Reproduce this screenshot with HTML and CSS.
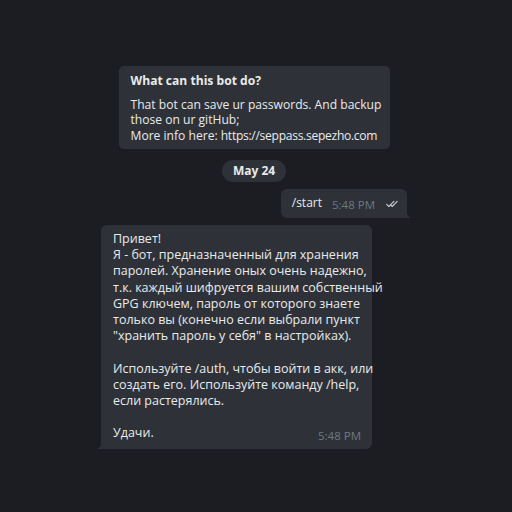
FILE: index.html
```html
<!DOCTYPE html>
<html lang="ru">
<head>
<meta charset="utf-8">
<link rel="stylesheet" href="styles.css">
</head>
<body>
<div class="chat">
  <div class="intro">
    <div class="intro-title">What can this bot do?</div>
    <div class="intro-text">That bot can save ur passwords. And backup<br>those on ur gitHub;<br>More info here: <span class="url">https://seppass.sepezho.com</span></div>
  </div>
  <div class="date">May 24</div>
  <div class="msg out">
    <span class="msg-text">/start</span>
    <span class="time">5:48 PM</span>
    <svg class="checks" width="12" height="8" viewBox="0 0 12 8"><path d="M0.7 4.3 L2.9 6.5 L7.9 1.3 M4.9 5.2 L6.2 6.5 L11.2 1.3" fill="none" stroke="#c9ccd1" stroke-width="1.1" stroke-linecap="round" stroke-linejoin="round"/></svg>
  </div>
  <div class="msg in">
    <p>Привет!<br>Я - бот, предназначенный для хранения<br>паролей. Хранение оных очень надежно,<br>т.к. каждый шифруется вашим собственный<br>GPG ключем, пароль от которого знаете<br>только вы (конечно если выбрали пункт<br>"хранить пароль у себя" в настройках).</p>
    <p>Используйте /auth, чтобы войти в акк, или<br>создать его. Используйте команду /help,<br>если растерялись.</p>
    <p>Удачи.<span class="time in-time">5:48 PM</span></p>
  </div>
</div>
</body>
</html>
```

FILE: styles.css
```css
html, body {
  margin: 0;
  padding: 0;
  background: #1c1d22;
  width: 512px;
  height: 512px;
  overflow: hidden;
}

body {
  font-family: "Open Sans", "Noto Sans", sans-serif;
  color: #e9eaec;
}

.chat {
  width: 306px;
  margin-left: 101px;
  padding-top: 66px;
  display: flex;
  flex-direction: column;
}

.intro {
  align-self: center;
  box-sizing: border-box;
  width: 271px;
  height: 83px;
  background: #2e3238;
  border-radius: 5px;
  padding: 7px 12px 0;
  font-size: 12.1px;
  line-height: 15.5px;
}

.intro-title {
  font-weight: 700;
  margin-bottom: 8px;
}

.intro-text {
  white-space: nowrap;
}

.url {
  letter-spacing: -0.3px;
}

.date {
  align-self: center;
  margin-top: 11px;
  height: 22px;
  box-sizing: border-box;
  padding: 0 11px;
  border-radius: 11px;
  background: #2e3238;
  font-size: 12px;
  font-weight: 700;
  line-height: 22px;
}

.msg {
  background: #2e3238;
  border-radius: 6px;
  position: relative;
  font-size: 12.5px;
}

.msg.out {
  align-self: flex-end;
  margin-top: 7px;
  height: 29px;
  box-sizing: border-box;
  padding: 0 9px 0 11px;
  display: flex;
  align-items: center;
  border-bottom-right-radius: 0;
}

.msg.out::after {
  content: "";
  position: absolute;
  right: -6px;
  bottom: 0;
  width: 6px;
  height: 6px;
  background: radial-gradient(circle at 100% 0, transparent 6px, #2e3238 6.5px);
}

.msg.out .msg-text {
  margin-top: -2px;
  font-size: 12px;
}

.time {
  color: #6d7882;
  font-size: 11.5px;
}

.msg.out .time {
  margin-left: 10px;
  margin-top: 2px;
}

.checks {
  margin-left: 11px;
  margin-top: 1px;
}

.msg.in {
  align-self: flex-start;
  margin-top: 7px;
  width: 271px;
  box-sizing: border-box;
  padding: 6px 11px 4px 12px;
  line-height: 16.2px;
  white-space: nowrap;
  border-bottom-left-radius: 0;
}

.msg.in::after {
  content: "";
  position: absolute;
  left: -6px;
  bottom: 0;
  width: 6px;
  height: 6px;
  background: radial-gradient(circle at 0 0, transparent 6px, #2e3238 6.5px);
}

.msg.in p {
  margin: 0 0 16.2px;
}

.msg.in p:last-child {
  margin-bottom: 0;
}

.in-time {
  float: right;
  margin-top: 3px;
}
```
